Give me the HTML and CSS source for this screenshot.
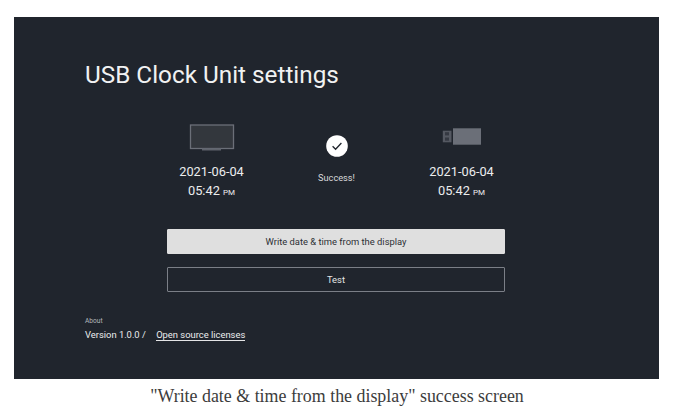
FILE: index.html
```html
<!DOCTYPE html>
<html lang="en">
<head>
<meta charset="utf-8">
<title>USB Clock Unit settings</title>
<link rel="stylesheet" href="styles.css">
</head>
<body>
<div class="screen">
	<h1 class="title">USB Clock Unit settings</h1>
	<div class="status">
		<div class="device">
			<svg class="device-icon" width="46" height="28" viewBox="0 0 46 28">
				<rect x="1.5" y="1" width="43" height="23.5" fill="#33373d" stroke="#6b6f78" stroke-width="1.3"/>
				<rect x="13" y="24.5" width="19" height="2" fill="#5f636c"/>
			</svg>
			<div class="date">2021-06-04</div>
			<div class="time">05:42 <small>PM</small></div>
		</div>
		<div class="result">
			<svg class="check" width="22" height="22" viewBox="0 0 22 22">
				<circle cx="11" cy="11" r="10.8" fill="#fff"/>
				<path d="M6.6 11.2l3 3 5.8-6.2" fill="none" stroke="#20252d" stroke-width="1.3"/>
			</svg>
			<div class="result-text">Success!</div>
		</div>
		<div class="device">
			<svg class="device-icon" width="46" height="28" viewBox="0 0 46 28">
				<rect x="3.8" y="6.7" width="8.7" height="11.6" fill="#555962"/>
				<rect x="6" y="8.2" width="4" height="3.2" fill="#20252d" opacity=".6"/>
				<rect x="6" y="13.5" width="4" height="3.2" fill="#20252d" opacity=".6"/>
				<rect x="14" y="4.3" width="28" height="16.4" fill="#6b6f78"/>
			</svg>
			<div class="date">2021-06-04</div>
			<div class="time">05:42 <small>PM</small></div>
		</div>
	</div>
	<div class="actions">
		<button class="btn btn-on">Write date &amp; time from the display</button>
		<button class="btn">Test</button>
	</div>
	<div class="about">
		<div class="about-label">About</div>
		<div class="about-line">Version 1.0.0 / <a class="link">Open source licenses</a></div>
	</div>
</div>
<p class="caption">"Write date &amp; time from the display" success screen</p>
</body>
</html>
```

FILE: styles.css
```css
body{margin: 0;background-color: #fff;font-family: Roboto, sans-serif;overflow: hidden;}
.screen{width: 645px;height: 362px;margin: 17px 0 0 14px;background-color: #20252d;color: #eceded;box-sizing: border-box;padding: 43px 0 0 71px;}
.title{margin: 0;font-size: 24.3px;line-height: 30px;font-weight: 400;color: #f1f2f2;}
.status{display: grid;grid-template-columns: 125px 125px 125px;margin: 34px 0 0 64px;}
.device{text-align: center;}
.device-icon{display: block;margin: 0 auto;}
.date{margin-top: 10px;font-size: 12.8px;line-height: 19px;}
.time{font-size: 12.8px;line-height: 19px;}
.time small{font-size: 8px;}
.result{text-align: center;padding-top: 11px;}
.check{display: block;margin: 0 auto;}
.result-text{margin-top: 15px;font-size: 9.2px;line-height: 12px;color: #d8d9db;}
.actions{display: flex;flex-direction: column;gap: 13px;width: 338px;margin: 27px 0 0 82px;}
.btn{height: 25px;padding: 0;background: none;border: 1px solid #7b7f87;border-radius: 1px;font-family: Roboto, sans-serif;font-size: 9.4px;color: #e4e5e6;}
.btn-on{background-color: #dfdfdf;border-color: #dfdfdf;color: #2c2f35;}
.about{margin-top: 25px;}
.about-label{font-size: 6.6px;line-height: 8px;color: #b4b6ba;}
.about-line{margin-top: 3px;font-size: 9.4px;line-height: 14px;}
.link{margin-left: 8px;border-bottom: 1px solid #e4e5e6;}
.caption{margin: 7px 0 0;width: 674px;text-align: center;font-family: "Liberation Serif", serif;font-size: 17.9px;line-height: 21px;color: #3c3c3c;}
```
